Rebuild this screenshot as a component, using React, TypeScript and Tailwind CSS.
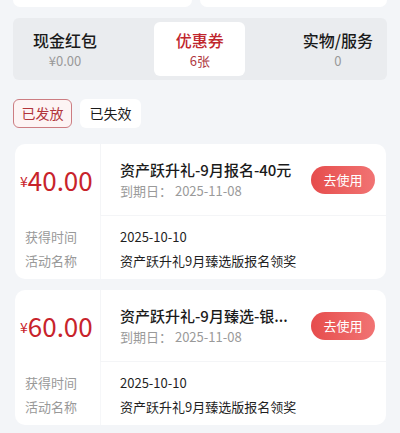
import React from 'react'

const font = { fontFamily: '"Noto Sans CJK SC", "Noto Sans", sans-serif' }

type Coupon = {
  amount: string
  title: string
  expire: string
  got: string
  activity: string
}

const coupons: Coupon[] = [
  {
    amount: '40.00',
    title: '资产跃升礼-9月报名-40元',
    expire: '2025-11-08',
    got: '2025-10-10',
    activity: '资产跃升礼9月臻选版报名领奖',
  },
  {
    amount: '60.00',
    title: '资产跃升礼-9月臻选-银...',
    expire: '2025-11-08',
    got: '2025-10-10',
    activity: '资产跃升礼9月臻选版报名领奖',
  },
]

function CouponCard({ c }: { c: Coupon }) {
  return (
    <div className="mr-[14px] ml-[15px] overflow-hidden rounded-[10px] bg-white">
      <div className="grid grid-cols-[86px_minmax(0,1fr)]">
        <div className="flex h-[72px] items-center border-r border-[#f4f5f7] pl-[5px] text-[#c8232b]">
          <span className="mt-[3px] text-[14px]">¥</span>
          <span className="text-[26px] leading-none">{c.amount}</span>
        </div>
        <div className="flex h-[72px] items-center gap-[8px] border-b border-[#f4f5f7] pr-[11px] pl-[19px]">
          <div className="min-w-0 flex-1">
            <div className="text-[15px] leading-[20px] font-medium whitespace-nowrap text-[#1a1a1a]">{c.title}</div>
            <div className="mt-[2px] text-[13px] leading-[18px] text-[#9a9a9a]">
              到期日：&nbsp;{c.expire}
            </div>
          </div>
          <button
            type="button"
            className="h-[28px] w-[64px] shrink-0 rounded-full bg-gradient-to-r from-[#e64c4c] to-[#f17373] text-[13px] text-white"
          >
            去使用
          </button>
        </div>
        <div className="border-r border-[#f6f7f9] pt-[9px] pb-[6px] pl-[10px] text-[13px] leading-[24px] text-[#999999]">
          <div>获得时间</div>
          <div>活动名称</div>
        </div>
        <div className="pt-[9px] pb-[6px] pl-[19px] text-[13px] leading-[24px] text-[#1f1f1f]">
          <div>{c.got}</div>
          <div>{c.activity}</div>
        </div>
      </div>
    </div>
  )
}

export default function App() {
  return (
    <div className="min-h-[433px] bg-[#f3f5f8] pb-4" style={font}>
      <div className="flex gap-[8px] px-[13px]">
        <div className="h-[7px] flex-1 rounded-b-[10px] bg-white" />
        <div className="h-[7px] w-[187px] rounded-b-[10px] bg-white" />
      </div>

      <div className="mx-[13px] mt-[11px] flex h-[62px] items-center justify-between rounded-[6px] bg-[#eaecef] pr-[14px] pl-[20px]">
        <div className="flex flex-col items-center">
          <div className="text-[16px] leading-[22px] font-medium text-[#1a1a1a]">现金红包</div>
          <div className="mt-[1px] text-[13px] leading-[18px] text-[#999999]">¥0.00</div>
        </div>
        <div className="flex h-[54px] w-[91px] flex-col items-center justify-center rounded-[6px] bg-white">
          <div className="text-[16px] leading-[22px] font-medium text-[#c0262d]">优惠券</div>
          <div className="mt-[1px] text-[13px] leading-[18px] text-[#b03a3f]">6张</div>
        </div>
        <div className="flex flex-col items-center">
          <div className="text-[16px] leading-[22px] font-medium text-[#1a1a1a]">实物/服务</div>
          <div className="mt-[1px] text-[13px] leading-[18px] text-[#999999]">0</div>
        </div>
      </div>

      <div className="mt-[19px] flex gap-[8px] px-[13px]">
        <button
          type="button"
          className="h-[29px] w-[59px] rounded-[6px] border border-[#cc7d82] bg-[#fdf4f4] text-[14px] text-[#b2353b]"
        >
          已发放
        </button>
        <button type="button" className="h-[29px] w-[61px] rounded-[6px] bg-white text-[14px] text-[#1a1a1a]">
          已失效
        </button>
      </div>

      <div className="mt-[16px] flex flex-col gap-[11px]">
        {coupons.map((c, i) => (
          <CouponCard key={i} c={c} />
        ))}
      </div>
    </div>
  )
}
